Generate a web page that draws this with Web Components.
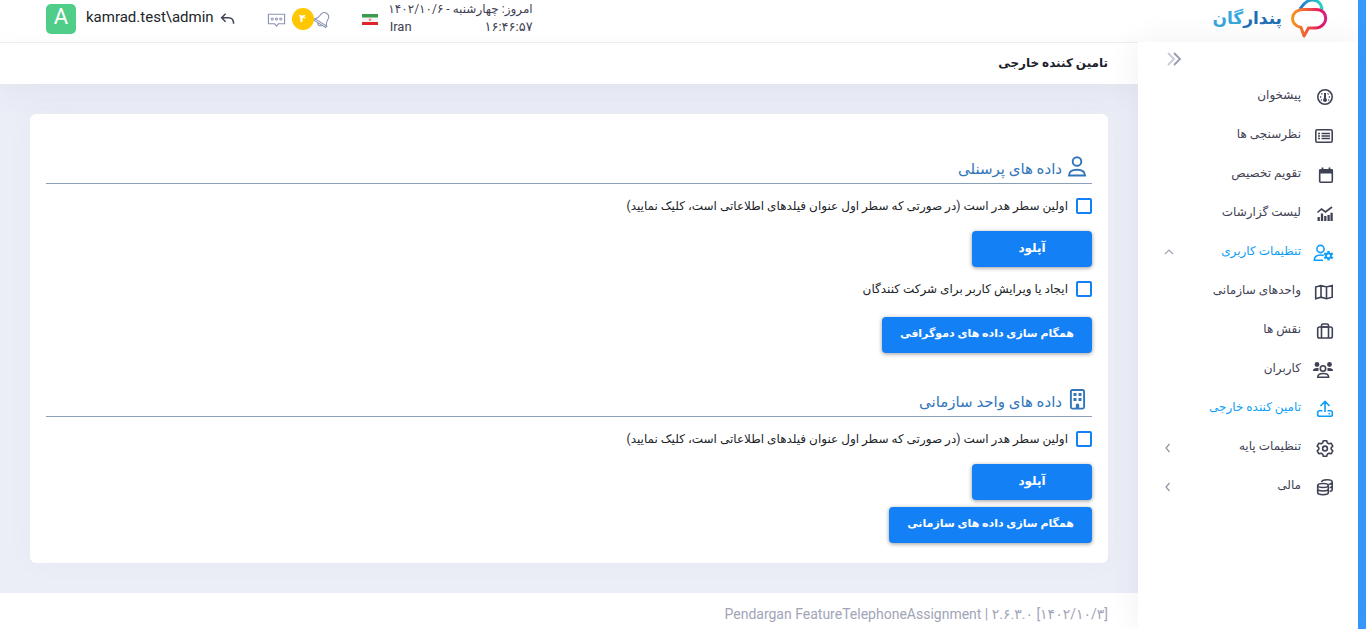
<!DOCTYPE html>
<html lang="fa" dir="rtl">
<head>
<meta charset="utf-8">
<title>تامین کننده خارجی</title>
<style>
  html { --blue: #1380f5; --active: #0f9ef7; --ink: #3f4254; --fa: Roboto, "DejaVu Sans", sans-serif; }
  body { margin: 0; font-family: var(--fa); font-size: 12px; color: #212529; background: #ebeef7; }
</style>
</head>
<body>
<app-shell>
  <brand-logo slot="brand"></brand-logo>
  <top-bar slot="top"></top-bar>
  <side-nav slot="side">
    <nav-item icon="gauge">پیشخوان</nav-item>
    <nav-item icon="list">نظرسنجی ها</nav-item>
    <nav-item icon="calendar">تقویم تخصیص</nav-item>
    <nav-item icon="chart">لیست گزارشات</nav-item>
    <nav-item icon="usercog" active arrow="up">تنظیمات کاربری</nav-item>
    <nav-item icon="map">واحدهای سازمانی</nav-item>
    <nav-item icon="case">نقش ها</nav-item>
    <nav-item icon="users">کاربران</nav-item>
    <nav-item icon="upload" active>تامین کننده خارجی</nav-item>
    <nav-item icon="gear" arrow="left">تنظیمات پایه</nav-item>
    <nav-item icon="coins" arrow="left">مالی</nav-item>
  </side-nav>
  <page-title slot="title">تامین کننده خارجی</page-title>
  <form-card>
    <data-section icon="person">
      <span slot="heading">داده های پرسنلی</span>
      <check-row>اولین سطر هدر است (در صورتی که سطر اول عنوان فیلدهای اطلاعاتی است، کلیک نمایید)</check-row>
      <action-button>آپلود</action-button>
      <check-row>ایجاد یا ویرایش کاربر برای شرکت کنندگان</check-row>
      <action-button wide>همگام سازی داده های دموگرافی</action-button>
    </data-section>
    <data-section icon="building">
      <span slot="heading">داده های واحد سازمانی</span>
      <check-row>اولین سطر هدر است (در صورتی که سطر اول عنوان فیلدهای اطلاعاتی است، کلیک نمایید)</check-row>
      <action-button>آپلود</action-button>
      <action-button wide after>همگام سازی داده های سازمانی</action-button>
    </data-section>
  </form-card>
  <page-footer slot="footer">Pendargan FeatureTelephoneAssignment | ۲.۶.۳.۰ [۱۴۰۲/۱۰/۳]</page-footer>
</app-shell>

<script>
const define = (name, html, setup) => {
  const t = document.createElement('template');
  t.innerHTML = html;
  customElements.define(name, class extends HTMLElement {
    constructor() { super(); this.attachShadow({ mode: 'open' }).append(t.content.cloneNode(true)); }
    connectedCallback() { if (setup) setup(this, this.shadowRoot); }
  });
};

const ICONS = {
  gauge: `<circle cx="12" cy="10" r="7.2"/><path d="M12 6v6" stroke-width="2"/><circle cx="12" cy="13" r="1.2" fill="currentColor"/><path d="M7 10h1.2M15.8 10H17M8.5 6.5l.8.8M15.5 6.5l-.8.8M7.8 13h1M15.2 13h1"/>`,
  list: `<rect x="2.8" y="3.8" width="16.4" height="12.4" rx="1.5"/><path d="M5 7.5h2M5 10h2M5 12.5h2M8.500 7.5h8.500M8.500 10h8.500M8.500 12.5h8.500" stroke-width="1.7"/>`,
  calendar: `<rect x="6.7" y="4.7" width="12.6" height="12.6" rx="1"/><path d="M6 4.500h14v4H6z" fill="currentColor" stroke="none"/><path d="M9.500 2.500v2M16.500 2.500v2" stroke-width="1.8"/>`,
  chart: `<path d="M4.500 8.500l4-3.500 4 3 6.500-5"/><path d="M5.700 17v-4M9 17V9.500M12.300 17v-5M15.600 17V11M18.600 17V8.800" stroke-width="2.3"/>`,
  usercog: `<circle cx="7.500" cy="6" r="3.600"/><path d="M10 17.300H1.300c0-3.600 2-5.300 6.200-5.300 1.300 0 2.300.1 3.200.4"/><path d="M15.500 8v9.600M11.300 10.400l8.400 4.800M19.700 10.400l-8.400 4.800" stroke-width="2.400"/><circle cx="15.500" cy="12.800" r="3.300" fill="currentColor" stroke="none"/><circle cx="15.500" cy="12.800" r="1.500" fill="#fff" stroke="none"/>`,
  map: `<path d="M2.700 5l5.300-1.500 5.500 1.500 5.700-1.500v11.700l-5.700 1.500-5.500-1.500-5.300 1.500zM8 3.700v11.500M13.500 5v11.500"/>`,
  case: `<rect x="4.700" y="6" width="14.600" height="11" rx="1.800"/><path d="M8.500 17V4.500Q8.500 3 10 3h4q1.500 0 1.500 1.500V17M8.500 6h7"/>`,
  users: `<circle cx="4" cy="4.500" r="2.400" fill="currentColor" stroke="none"/><circle cx="16.500" cy="4.500" r="2.400" fill="currentColor" stroke="none"/><path d="M0 11c0-2.500 1.500-3.200 5.500-3v3zM20 11c0-2.500-1.500-3.200-5.500-3v3z" fill="currentColor" stroke="none"/><circle cx="10" cy="8.500" r="2.700"/><path d="M4.800 17.300h10.800c0-2.800-1.600-3.800-5.400-3.800s-5.400 1-5.400 3.800z"/>`,
  upload: `<path d="M12 13V2.500M7.500 7L12 2.500 16.500 7M9.500 11.700H6.500Q4.700 11.700 4.700 13.500v2Q4.700 17.300 6.500 17.300h11q1.800 0 1.800-1.800v-2q0-1.800-1.800-1.800h-3M15.500 14.700h1.500"/>`,
  gear: `<path d="M10.300 2.800h3.400l.6 2.100 1.600.9 2.200-.6 1.700 2.900-1.600 1.600v1.600l1.600 1.600-1.700 2.900-2.200-.6-1.600.9-.6 2.100h-3.400l-.6-2.100-1.600-.9-2.200.6-1.700-2.900 1.600-1.600V9.700L4.200 8.100l1.700-2.900 2.200.6 1.600-.9z" stroke-linejoin="round"/><circle cx="12" cy="10.500" r="2.400"/>`,
  coins: `<ellipse cx="10" cy="8.500" rx="5.300" ry="2"/><path d="M4.700 8.500v7.300c0 2.600 10.600 2.600 10.600 0V8.500M4.700 12.100c0 2.500 10.600 2.500 10.600 0M8.500 5c.5-3 10.700-3 10.700 0v7.500c0 1-.8 1.600-2.500 2M19.200 5c0 1.400-1.500 2-3.500 2.200M19.200 8.700c0 1-.8 1.600-2.500 2"/>`,
  person: `<g stroke-width="1.900"><circle cx="10" cy="5.500" r="4.300"/><path d="M2 19.500h16c0-4-2.500-5.700-8-5.700s-8 1.700-8 5.700z"/></g>`,
  building: `<rect x="3.900" y="1" width="13.200" height="18.600" rx="1.500" stroke-width="1.900"/><path d="M6.500 4h3v3h-3zM11.500 4h3v3h-3zM6.500 9h3v3h-3zM11.500 9h3v3h-3zM8.800 19v-3.500q1.700-2 3.400 0V19z" fill="currentColor" stroke="none"/>`,
  back: `<path d="M7 3.500L2 8.500l5 5M2 8.500h8.500Q17 8.500 17 16" stroke-width="1.800"/>`,
  chat: `<path d="M1.500 4.500h17v10h-6.500l-2 2.500-2-2.500h-6.500z" stroke-width="1.200"/><path d="M4.500 8.500h2v2h-2zM9 8.500h2v2h-2zM13.500 8.500h2v2h-2z" stroke-width="1"/>`,
  bell: `<g transform="rotate(32 10 10)" stroke-width="1.200"><path d="M2.500 14.500c2.500-2 2.500-3 2.500-6C5 4.500 7 2.500 10 2.500s5 2 5 6c0 3 0 4 2.500 6zM2.500 14.500v2h15v-2M7.500 17q2.500 3 5 0"/></g>`,
  chevrons: `<path d="M4 4l6 6-6 6" stroke="#c9cbd9" stroke-width="1.900"/><path d="M10 4l6 6-6 6" stroke="#9a9db5" stroke-width="1.900"/>`,
  up: `<path d="M6 11l4-4 4 4" stroke="#a1a5b7" stroke-width="1.200"/>`,
  left: `<path d="M10.500 6L7 10l3.500 4" stroke="#8f93a8" stroke-width="1.200"/>`
};
const icon = n => `<svg viewBox="0 0 20 20" fill="none" stroke="currentColor" stroke-width="1.600" aria-hidden="true">${ICONS[n] || ''}</svg>`;

define('ui-icon', `<style>:host{display:block;flex:none;width:20px;height:20px}svg{display:block;width:100%;height:100%;overflow:visible}</style><span></span>`,
  (el, r) => { r.querySelector('span').innerHTML = icon(el.getAttribute('name')); });

define('app-shell', `<style>
  :host{display:grid;grid-template-columns:220px minmax(0,1fr);grid-template-rows:42px 1fr;min-height:100vh;border-right:8px solid #3699ff;background:#fff}
  aside{background:#fff;box-shadow:0 0 28px rgba(82,63,105,.08);position:relative;z-index:2}
  .main{display:flex;flex-direction:column;background:#ebeef7}
  main{flex:1;padding:30px}
</style>
<div><slot name="brand"></slot></div>
<header><slot name="top"></slot></header>
<aside><slot name="side"></slot></aside>
<div class="main"><slot name="title"></slot><main><slot></slot></main><slot name="footer"></slot></div>`);

define('brand-logo', `<style>
  :host{display:block}
  a{display:flex;align-items:flex-start;gap:8px;height:42px;padding-right:30px;text-decoration:none}
  svg{width:38px;height:38px;flex:none}
  b{font-size:17px;line-height:36px;color:#1f6fb5}
  i{font-style:normal;color:#37a7de}
</style>
<a href="#"><svg viewBox="0 0 38 38" fill="none" stroke-width="3" aria-hidden="true">
<defs><linearGradient id="w"><stop offset="0" stop-color="#f7941e"/><stop offset=".45" stop-color="#f15a38"/><stop offset=".8" stop-color="#e6195f"/><stop offset="1" stop-color="#d61f85"/></linearGradient>
<linearGradient id="c"><stop offset="0" stop-color="#1b75d0"/><stop offset="1" stop-color="#2bd6c3"/></linearGradient></defs>
<path d="M10 9C14 3 17 0 22 0c6 0 10 4 10 10" stroke="url(#c)"/>
<path d="M13 9.500h13c13 0 13 17 0 18.500h-7.500l-4.500 8-3-8.500C-1.500 25 .5 9.500 13 9.500z" stroke="url(#w)" stroke-linejoin="round"/></svg>
<b>پندار<i>گان</i></b></a>`);

define('top-bar', `<style>
  :host{display:flex;direction:ltr;align-items:flex-start;height:42px;padding-left:46px;color:#3f4254}
  .avatar{width:30px;height:30px;margin-top:4px;border-radius:5px;background:#50cd89;color:#fff;font-size:22px;line-height:26px;text-align:center}
  .name{margin-left:10px;font-size:15px;line-height:34px;color:#212529}
  .icons{display:flex;align-items:center;height:38px;color:#8d93b3}
  .back{width:16px;height:16px;margin-left:6px;color:#3f4254}
  .chat{margin-left:31px;width:19px;height:19px}
  .badge{width:22px;height:22px;margin-left:6px;border-radius:50%;background:#ffc700;color:#fff;font-size:11px;font-weight:bold;line-height:22px;text-align:center}
  .bell{width:18px;height:18px}
  .flag{width:16px;height:11px;margin-left:30px}
  .when{display:flex;flex-wrap:wrap;justify-content:space-between;direction:rtl;width:143px;margin-left:12px;font-size:12px;line-height:18px}
  .when div{white-space:nowrap}
  .when .time,.when .iran{font-size:13px}
</style>
<div class="avatar">A</div><div class="name">kamrad.test\\admin</div>
<div class="icons"><ui-icon class="back" name="back"></ui-icon><ui-icon class="chat" name="chat"></ui-icon><div class="badge">۴</div><ui-icon class="bell" name="bell"></ui-icon>
<svg class="flag" viewBox="0 0 16 11" aria-hidden="true"><path fill="#f4f4f4" d="M0 0h16v11H0z"/><path fill="#3a9c4b" d="M0 0h16v3.500H0z"/><path fill="#e0242b" d="M0 8h16v3H0z"/><circle cx="8" cy="5.700" r="1.300" fill="#ec8a8e"/></svg></div>
<div class="when"><div>امروز: چهارشنبه - ۱۴۰۲/۱۰/۶</div><div class="time">۱۶:۴۶:۵۷</div><div class="iran">Iran</div></div>`);

define('side-nav', `<style>
  :host{display:block}
  button{display:block;margin:0 auto 0 0;padding:7px 26px 8px;border:0;background:none}
  nav{display:block}
</style>
<button type="button" aria-label="منو"><ui-icon name="chevrons"></ui-icon></button><nav><slot></slot></nav>`);

define('nav-item', `<style>
  :host{display:block;color:var(--ink)}
  :host([active]){color:var(--active)}
  a{display:flex;align-items:center;height:39px;padding:0 25px 0 21px;color:inherit;text-decoration:none}
  .label{flex:1;padding-right:12px;font-size:12px;line-height:24px;padding-bottom:3px;white-space:nowrap}
</style>
<a href="#"><ui-icon class="lead"></ui-icon><span class="label"><slot></slot></span><ui-icon class="arrow"></ui-icon></a>`,
  (el, r) => {
    r.querySelectorAll('ui-icon').forEach(i => {
      const n = i.className === 'lead' ? el.getAttribute('icon') : el.getAttribute('arrow');
      i.shadowRoot.querySelector('span').innerHTML = icon(n);
    });
  });

define('page-title', `<style>
  :host{display:block;background:#fff;border-top:1px solid #ededf0;box-shadow:0 10px 30px rgba(82,63,105,.06)}
  h1{margin:0;padding:0 30px;font-size:12px;line-height:41px;font-weight:bold;color:#1e1e2d}
</style><h1><slot></slot></h1>`);

define('form-card', `<style>
  :host{display:block;background:#fff;border-radius:6px;padding:38px 16px 20px;box-shadow:0 0 30px rgba(82,63,105,.03)}
  form{display:flex;flex-direction:column;gap:32px}
</style><form><slot></slot></form>`);

define('data-section', `<style>
  :host{display:block}
  h2{display:flex;align-items:flex-start;gap:5px;box-sizing:border-box;height:32px;margin:0;padding:4px 5px 0;border-bottom:1px solid #8ba0b5;font-size:15px;line-height:26px;font-weight:normal;color:#3276b9}
</style><h2><ui-icon></ui-icon><slot name="heading"></slot></h2><slot></slot>`,
  (el, r) => { r.querySelector('ui-icon').shadowRoot.querySelector('span').innerHTML = icon(el.getAttribute('icon')); });

define('check-row', `<style>
  :host{display:block;padding-top:14px}
  label{display:flex;align-items:center;gap:8px;height:16px;width:fit-content;font-size:12px;line-height:16px;white-space:nowrap}
  input{appearance:none;box-sizing:border-box;flex:none;width:16px;height:16px;margin:0;border:2px solid var(--blue);border-radius:2px;background:#fff}
  input:checked{background:var(--blue)}
</style><label><input type="checkbox"><span><slot></slot></span></label>`);

define('action-button', `<style>
  :host{display:block;padding-top:17px}
  :host([wide]){padding-top:20px}
  :host([after]){padding-top:7px}
  button{display:block;min-width:120px;height:36px;padding:0 18px 3px;border:0;border-radius:4px;background:var(--blue);color:#fff;font-family:var(--fa);font-size:12px;font-weight:bold;white-space:nowrap;box-shadow:0 1px 4px rgba(0,0,0,.4)}
  :host([wide]) button{font-size:11px}
</style><button type="button"><slot></slot></button>`);

define('page-footer', `<style>
  :host{display:block;background:#fff}
  footer{direction:ltr;text-align:right;padding:9px 30px 3px;font-size:14px;line-height:24px;color:#a1a5b7}
</style><footer><slot></slot></footer>`);
</script>
</body>
</html>
